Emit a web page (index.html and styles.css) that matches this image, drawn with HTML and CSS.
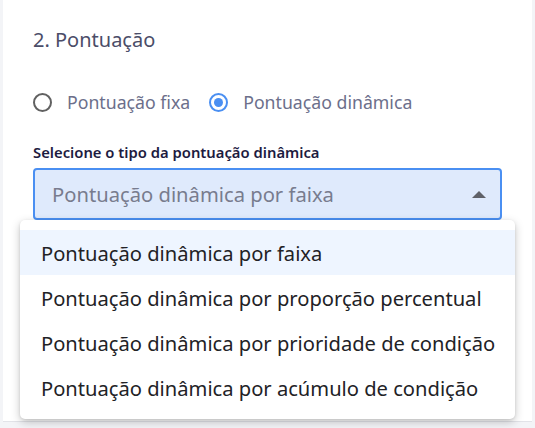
FILE: index.html
```html
<!DOCTYPE html>
<html lang="pt">
<head>
<meta charset="utf-8">
<link rel="stylesheet" href="styles.css">
</head>
<body>
<div class="page">
  <div class="card">
    <h2 class="title">2. Pontuação</h2>
    <div class="radios">
      <label class="radio"><span class="dot"></span>Pontuação fixa</label>
      <label class="radio checked"><span class="dot"></span>Pontuação dinâmica</label>
    </div>
    <div class="field-label">Selecione o tipo da pontuação dinâmica</div>
    <div class="select">
      <span class="value">Pontuação dinâmica por faixa</span>
      <span class="arrow"></span>
    </div>
    <ul class="menu">
      <li class="item active">Pontuação dinâmica por faixa</li>
      <li class="item">Pontuação dinâmica por proporção percentual</li>
      <li class="item">Pontuação dinâmica por prioridade de condição</li>
      <li class="item">Pontuação dinâmica por acúmulo de condição</li>
    </ul>
  </div>
</div>
</body>
</html>
```
FILE: styles.css
```css
html, body {
  margin: 0;
  padding: 0;
}
body {
  font-family: "Noto Sans", "Open Sans", sans-serif;
  background: #f3f4f7;
  width: 535px;
  height: 428px;
  overflow: hidden;
}
.page {
  padding: 0 3px 0 3px;
  height: 428px;
  box-sizing: border-box;
}
.card {
  position: relative;
  background: #ffffff;
  height: 422px;
  box-sizing: border-box;
  padding: 27px 30px 0 30px;
  border-bottom: 1px solid #e2e3e8;
}
.title {
  margin: 0;
  font-size: 20px;
  line-height: 26px;
  font-weight: 400;
  color: #4b4d68;
}
.radios {
  display: flex;
  align-items: center;
  gap: 19px;
  margin-top: 37px;
  height: 24px;
}
.radio {
  display: flex;
  align-items: center;
  gap: 15px;
  font-size: 17.7px;
  color: #6c6f8b;
}
.dot {
  width: 19px;
  height: 19px;
  box-sizing: border-box;
  border: 2px solid #616161;
  border-radius: 50%;
  display: inline-flex;
  align-items: center;
  justify-content: center;
}
.radio.checked .dot {
  border-color: #4a8ff2;
}
.radio.checked .dot::after {
  content: "";
  width: 9px;
  height: 9px;
  border-radius: 50%;
  background: #4a8ff2;
}
.field-label {
  margin-top: 28px;
  font-size: 14.8px;
  line-height: 20px;
  font-weight: 600;
  color: #1d1b3f;
}
.select {
  margin-top: 6px;
  height: 52px;
  width: 469px;
  box-sizing: border-box;
  border: 2px solid #4a8ff2;
  border-radius: 4px;
  background: #dfeafc;
  display: flex;
  align-items: center;
  justify-content: space-between;
  padding: 0 14px 0 17px;
}
.value {
  font-size: 20.2px;
  color: #787c8e;
}
.arrow {
  width: 0;
  height: 0;
  border-left: 7px solid transparent;
  border-right: 7px solid transparent;
  border-bottom: 7px solid #5f6168;
  margin-right: 0;
}
.menu {
  position: absolute;
  left: 17px;
  top: 220px;
  width: 495px;
  margin: 0;
  padding: 10px 0 9px;
  list-style: none;
  background: #ffffff;
  border-radius: 5px;
  box-shadow: 0 3px 10px rgba(0, 0, 0, 0.22), 0 1px 3px rgba(0, 0, 0, 0.1);
}
.item {
  height: 45px;
  display: flex;
  align-items: center;
  padding-left: 21px;
  font-size: 20.15px;
  color: #222226;
}
.item.active {
  background: #eef5ff;
}
```
